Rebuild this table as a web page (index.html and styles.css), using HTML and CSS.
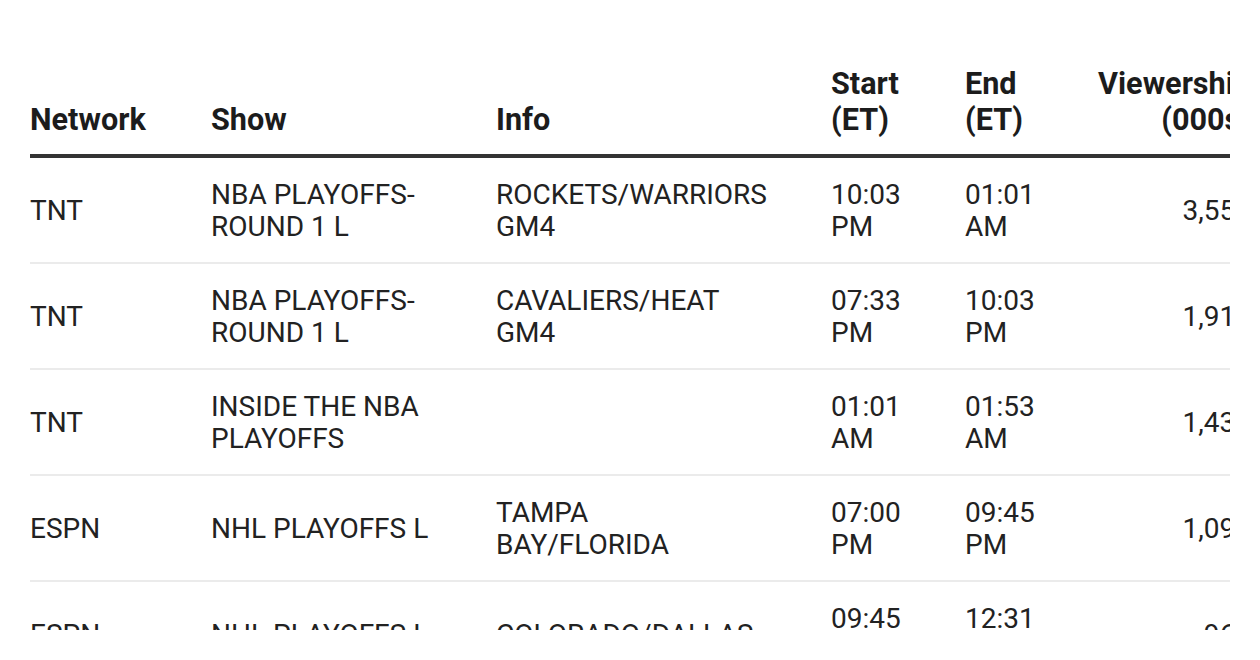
FILE: index.html
```html
<!DOCTYPE html>
<html lang="en">
<head>
<meta charset="utf-8">
<title>Ratings</title>
<link rel="stylesheet" href="styles.css">
</head>
<body>
<div class="scroller">
  <table class="ratings">
    <colgroup>
      <col class="c-net">
      <col class="c-show">
      <col class="c-info">
      <col class="c-start">
      <col class="c-end">
      <col class="c-view">
    </colgroup>
    <thead>
      <tr>
        <th>Network</th>
        <th>Show</th>
        <th>Info</th>
        <th>Start<br>(ET)</th>
        <th>End<br>(ET)</th>
        <th class="num">Viewership<br>(000s)</th>
      </tr>
    </thead>
    <tbody>
      <tr>
        <td>TNT</td>
        <td>NBA PLAYOFFS-<br>ROUND 1 L</td>
        <td>ROCKETS/WARRIORS<br>GM4</td>
        <td>10:03<br>PM</td>
        <td>01:01<br>AM</td>
        <td class="num">3,553</td>
      </tr>
      <tr>
        <td>TNT</td>
        <td>NBA PLAYOFFS-<br>ROUND 1 L</td>
        <td>CAVALIERS/HEAT<br>GM4</td>
        <td>07:33<br>PM</td>
        <td>10:03<br>PM</td>
        <td class="num">1,912</td>
      </tr>
      <tr>
        <td>TNT</td>
        <td>INSIDE THE NBA<br>PLAYOFFS</td>
        <td></td>
        <td>01:01<br>AM</td>
        <td>01:53<br>AM</td>
        <td class="num">1,436</td>
      </tr>
      <tr>
        <td>ESPN</td>
        <td>NHL PLAYOFFS L</td>
        <td>TAMPA<br>BAY/FLORIDA</td>
        <td>07:00<br>PM</td>
        <td>09:45<br>PM</td>
        <td class="num">1,094</td>
      </tr>
      <tr>
        <td>ESPN</td>
        <td>NHL PLAYOFFS L</td>
        <td>COLORADO/DALLAS</td>
        <td>09:45<br>PM</td>
        <td>12:31<br>AM</td>
        <td class="num">968</td>
      </tr>
    </tbody>
  </table>
</div>
</body>
</html>
```
FILE: styles.css
```css
html, body {
  margin: 0;
  padding: 0;
  background: #ffffff;
}

body {
  font-family: Roboto, "Liberation Sans", Arial, sans-serif;
  color: #222222;
}

.scroller {
  margin: 45px 30px 0 30px;
  width: 1200px;
  height: 585px;
  overflow: hidden;
}

.ratings {
  border-collapse: collapse;
  table-layout: fixed;
  width: 1221px;
}

.c-net { width: 181px; }
.c-show { width: 285px; }
.c-info { width: 335px; }
.c-start { width: 134px; }
.c-end { width: 133px; }
.c-view { width: 153px; }

.ratings th {
  font-size: 30.6px;
  line-height: 36px;
  font-weight: 700;
  color: #1c1c1c;
  text-align: left;
  vertical-align: bottom;
  padding: 21px 20px 16px 0;
  border-bottom: 4px solid #333333;
}

.ratings td {
  font-size: 28px;
  line-height: 32px;
  font-weight: 400;
  color: #222222;
  text-align: left;
  vertical-align: middle;
  padding: 21px 20px 19px 0;
  border-bottom: 2px solid #ebebeb;
}

.ratings .num {
  text-align: right;
  padding-right: 0;
}
```
